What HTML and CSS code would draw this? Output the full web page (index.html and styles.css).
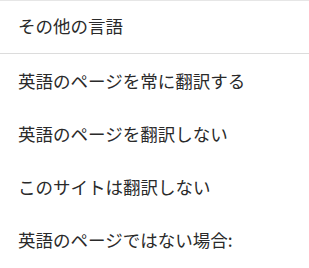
FILE: index.html
```html
<!DOCTYPE html>
<html lang="ja">
<head>
    <meta charset="UTF-8">
    <meta name="viewport" content="width=device-width, initial-scale=1.0">
    <title>翻訳メニュー</title>
    <link rel="stylesheet" href="styles.css">
</head>
<body>
    <div class="menu">
        <div class="menu-header">その他の言語</div>
        <ul class="menu-list">
            <li class="menu-item">英語のページを常に翻訳する</li>
            <li class="menu-item">英語のページを翻訳しない</li>
            <li class="menu-item">このサイトは翻訳しない</li>
            <li class="menu-item">英語のページではない場合:</li>
        </ul>
    </div>
</body>
</html>
```

FILE: styles.css
```css
body {
    margin: 0;
    padding: 0;
    background-color: #fff;
    font-family: "Noto Sans CJK JP", "Noto Sans", sans-serif;
    color: #2a2a2a;
}

.menu {
    border-top: 1px solid #e6e6e6;
}

.menu-header {
    height: 49px;
    display: flex;
    align-items: center;
    padding-left: 18px;
    padding-bottom: 3px;
    font-size: 17.5px;
    border-bottom: 1px solid #dcdcdc;
}

.menu-list {
    list-style: none;
    margin: 0;
    padding: 0;
}

.menu-item {
    height: 53px;
    display: flex;
    align-items: center;
    padding-left: 18px;
    font-size: 17.5px;
}
```
